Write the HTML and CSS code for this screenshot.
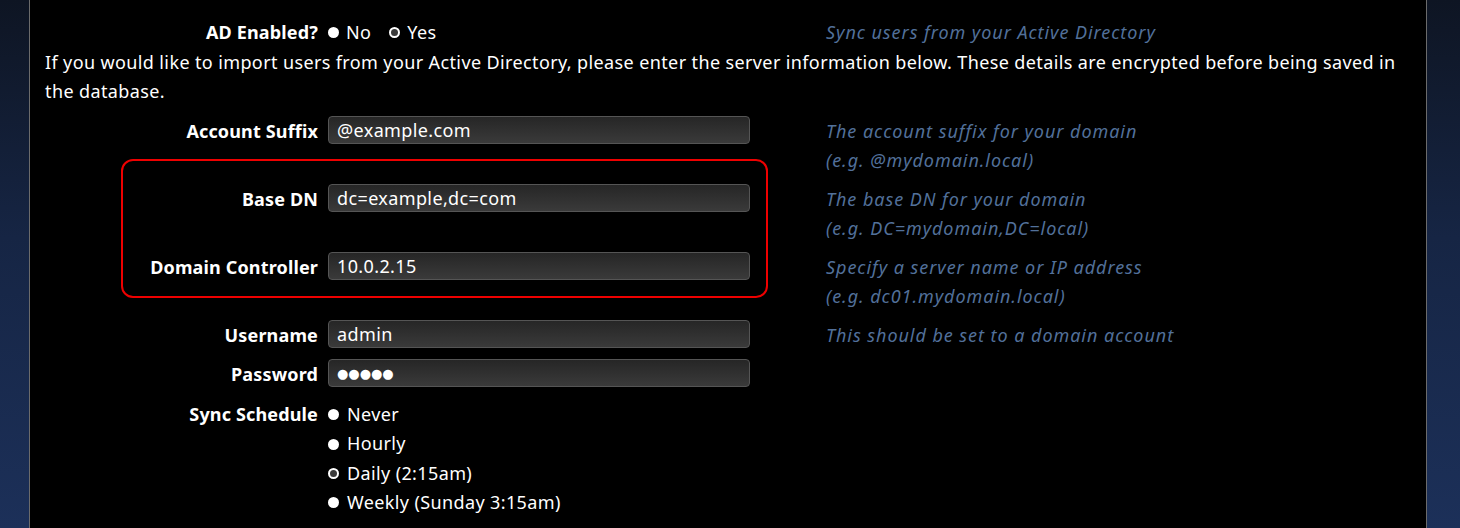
FILE: index.html
```html
<!DOCTYPE html>
<html lang="en">
<head>
<meta charset="utf-8">
<title>Active Directory Settings</title>
<link rel="stylesheet" href="styles.css">
</head>
<body>
<div class="panel">
  <div class="grid top">
    <div class="label">AD Enabled?</div>
    <div class="radios inline">
      <span class="opt"><span class="dot"></span>No</span>
      <span class="opt"><span class="dot ring"></span>Yes</span>
    </div>
    <div class="help">Sync users from your Active Directory</div>
  </div>
  <p class="intro">If you would like to import users from your Active Directory, please enter the server information below. These details are encrypted before being saved in the database.</p>
  <div class="grid fields">
    <div class="label">Account Suffix</div>
    <div class="field"><div class="input">@example.com</div></div>
    <div class="help">The account suffix for your domain<br>(e.g. @mydomain.local)</div>

    <div class="label">Base DN</div>
    <div class="field"><div class="input">dc=example,dc=com</div></div>
    <div class="help">The base DN for your domain<br>(e.g. DC=mydomain,DC=local)</div>

    <div class="label">Domain Controller</div>
    <div class="field"><div class="input">10.0.2.15</div></div>
    <div class="help">Specify a server name or IP address<br>(e.g. dc01.mydomain.local)</div>

    <div class="label">Username</div>
    <div class="field"><div class="input">admin</div></div>
    <div class="help">This should be set to a domain account</div>

    <div class="label">Password</div>
    <div class="field"><div class="input pw">●●●●●</div></div>
    <div class="help"></div>

    <div class="label sync">Sync Schedule</div>
    <div class="radios list">
      <span class="opt"><span class="dot"></span>Never</span>
      <span class="opt"><span class="dot"></span>Hourly</span>
      <span class="opt"><span class="dot ring"></span>Daily (2:15am)</span>
      <span class="opt"><span class="dot"></span>Weekly (Sunday 3:15am)</span>
    </div>
    <div class="help"></div>

    <div class="highlight"></div>
  </div>
</div>
</body>
</html>
```

FILE: styles.css
```css
html, body {
  margin: 0;
  height: 100%;
}
body {
  background: linear-gradient(to bottom, #0e1523 0%, #162544 45%, #1c3059 100%);
  font-family: "Noto Sans", "DejaVu Sans", sans-serif;
  font-size: 18px;
  line-height: 29px;
  letter-spacing: 0.38px;
  color: #ffffff;
  overflow: hidden;
}
.panel {
  margin: 0 33px 0 29px;
  min-height: 100%;
  box-sizing: border-box;
  background: #000;
  border-left: 1px solid #6b6b6b;
  border-right: 1px solid #6b6b6b;
  padding: 18px 15px 0 15px;
}
.grid {
  display: grid;
  grid-template-columns: 273px 488px 1fr;
  column-gap: 10px;
}
.fields {
  position: relative;
  row-gap: 10px;
  margin-top: 11px;
}
.label {
  text-align: right;
  font-weight: 700;
  letter-spacing: 0.15px;
}
.help {
  color: #52709a;
  font-style: italic;
  letter-spacing: 0.95px;
}
.intro {
  margin: 1px 0 0 0;
}
.field {
  margin-top: -1px;
}
.input {
  box-sizing: border-box;
  width: 422px;
  height: 28px;
  line-height: 26px;
  padding: 0 8px;
  border: 1px solid #555;
  border-radius: 4px;
  background: linear-gradient(to bottom, #262626, #3a3a3a);
  color: #fff;
}
.input.pw {
  font-size: 13px;
  letter-spacing: 0;
}
.radios {
  display: flex;
  flex-direction: column;
}
.radios.inline {
  flex-direction: row;
  gap: 18px;
}
.radios.inline .opt {
  gap: 7px;
}
.radios.list .opt {
  line-height: 29.4px;
}
.label.sync {
  padding-top: 1px;
}
.radios.list {
  padding-top: 1px;
}
.opt {
  display: flex;
  align-items: center;
  gap: 8px;
}
.dot {
  width: 11px;
  height: 11px;
  border-radius: 50%;
  background: #fff;
  box-sizing: border-box;
}
.dot.ring {
  background: #3a3a3a;
  border: 2px solid #fff;
}
.highlight {
  position: absolute;
  left: 76px;
  top: 41.5px;
  width: 647px;
  height: 139px;
  box-sizing: border-box;
  border: 2px solid #ee0000;
  border-radius: 12px;
  pointer-events: none;
}
```
